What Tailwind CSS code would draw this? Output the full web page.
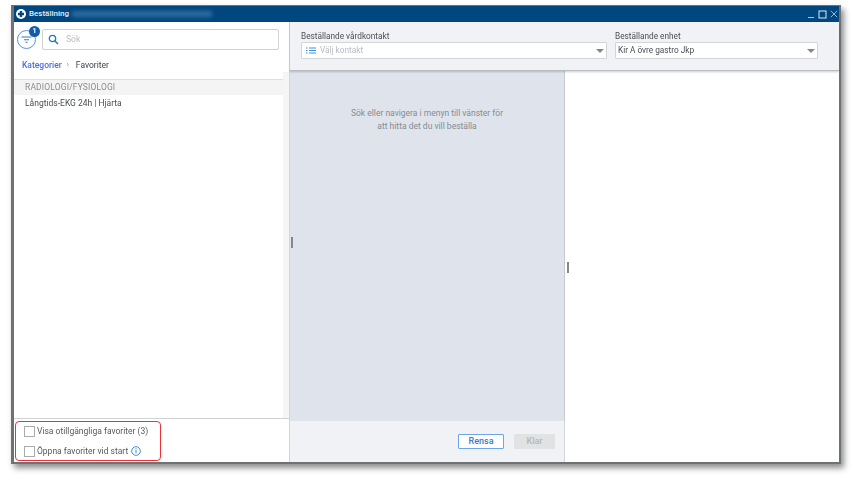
<!DOCTYPE html>
<html lang="en">
<head>
<meta charset="UTF-8" />
<meta name="viewport" content="width=device-width, initial-scale=1.0"/>
<title>Beställning</title>
<script src="https://cdn.jsdelivr.net/npm/@tailwindcss/browser@4"></script>
</head>
<body class="bg-white w-[854px] h-[482px] overflow-hidden pt-[5px] pl-[11px] font-['Roboto',sans-serif] text-[8.5px] text-[#444b54]">
  <!-- Window -->
  <div class="w-[830px] h-[459px] flex flex-col border-l-[3px] border-r-2 border-b-2 border-t border-[#6f7275] shadow-[3px_4px_6px_rgba(0,0,0,0.45)] blur-[0.35px]">
    <!-- Title bar -->
    <div class="h-[16px] shrink-0 bg-[#00467f] flex items-center pl-[2px] pr-[1px] text-white">
      <svg class="w-[10px] h-[10px]" viewBox="0 0 12 12"><circle cx="6" cy="6" r="6" fill="#fff"/><path d="M4.6 2.4h2.8v2.2h2.2v2.8H7.4v2.2H4.6V7.4H2.4V4.6h2.2z" fill="#00467f"/></svg>
      <span class="ml-[3px] text-[8px] font-medium text-[#e6eef5]">Beställning</span>
      <div class="ml-[3px] w-[140px] h-[6px] bg-[#2f6d9f] blur-[2px]"></div>
      <div class="ml-auto flex items-center gap-[3px]">
        <svg class="w-[8px] h-[8px]" viewBox="0 0 8 8"><path d="M1 7.5h6" stroke="#a9c2d8" stroke-width="1"/></svg>
        <svg class="w-[9px] h-[9px]" viewBox="0 0 9 9"><rect x="1" y="1" width="7" height="7" fill="none" stroke="#dfe9f1" stroke-width="1"/></svg>
        <svg class="w-[8px] h-[8px]" viewBox="0 0 8 8"><path d="M.8.8l6.4 6.4M7.2.8L.8 7.2" stroke="#a9c2d8" stroke-width="0.9"/></svg>
      </div>
    </div>

    <div class="flex-1 flex min-h-0">
      <!-- Left panel -->
      <div class="w-[275px] shrink-0 flex flex-col bg-white">
        <div class="flex-1 flex min-h-0">
          <div class="flex-1 min-w-0">
            <div class="flex items-center pl-[3px] pt-[7px] pr-[4px]">
              <div class="relative w-[19px] h-[19px] rounded-full border-[1.5px] border-[#4a97dc] flex items-center justify-center">
                <svg class="w-[11px] h-[9px]" viewBox="0 0 11 9"><path d="M.5 2h10M3 4.7h5M4.5 7.2h2" stroke="#2f7cc4" stroke-width="1.1"/></svg>
                <span class="absolute -top-[5px] -right-[5px] w-[11px] h-[11px] rounded-full bg-[#0f5ca8] text-white text-[7px] font-bold leading-[11px] text-center">1</span>
              </div>
              <div class="ml-[6px] w-[237px] h-[21px] bg-white border border-[#cfd2d6] rounded-[2px] flex items-center pl-[5px]">
                <svg class="w-[11px] h-[11px]" viewBox="0 0 11 11"><circle cx="4.5" cy="4.5" r="3.2" fill="none" stroke="#1f78c8" stroke-width="1.3"/><path d="M7 7l3 3" stroke="#1f78c8" stroke-width="1.5"/></svg>
                <span class="ml-[7px] text-[#b7bbc0]">Sök</span>
              </div>
            </div>
            <div class="flex items-center pl-[8px] mt-[9px] h-[12px]">
              <span class="text-[#4a70d0] font-medium">Kategorier</span>
              <span class="ml-[5px] mr-[7px] text-[7px] text-[#777]">›</span>
              <span class="text-[#3d4652]">Favoriter</span>
            </div>
            <div class="mt-[8px] h-[16px] bg-[#f4f4f5] border-t border-[#dddfe2] pl-[11px] flex items-center text-[8.5px] tracking-[0.15px] text-[#8a8d91]">RADIOLOGI/FYSIOLOGI</div>
            <div class="pl-[11px] mt-[2px] h-[12px] flex items-center text-[#4a4f55]">Långtids-EKG 24h | Hjärta</div>
          </div>
          <div class="w-[6px] shrink-0 mt-[50px] bg-[#f5f5f6]"></div>
        </div>
        <!-- Favourite options -->
        <div class="h-[44px] shrink-0 border-t border-[#cfd1d4] relative pl-[10px] pt-[6px] text-[#555a60]">
          <div class="flex items-center h-[12px]">
            <span class="w-[11px] h-[11px] border border-[#a8abaf] bg-white"></span>
            <span class="ml-[2px]">Visa otillgängliga favoriter (3)</span>
          </div>
          <div class="flex items-center h-[12px] mt-[8px]">
            <span class="w-[11px] h-[11px] border border-[#a8abaf] bg-white"></span>
            <span class="ml-[2px]">Öppna favoriter vid start</span>
            <svg class="ml-[3px] w-[10px] h-[10px]" viewBox="0 0 10 10"><circle cx="5" cy="5" r="4.3" fill="none" stroke="#2a7fd0" stroke-width="0.9"/><path d="M5 4.2v3M5 2.4v1" stroke="#2a7fd0" stroke-width="1"/></svg>
          </div>
          <div class="absolute left-[1px] top-[2px] w-[146px] h-[40px] border-[1.5px] border-[#ee3039] rounded-[4px]"></div>
        </div>
      </div>

      <!-- Main -->
      <div class="flex-1 min-w-0 flex flex-col border-l border-[#d4d6da]">
        <!-- Header -->
        <div class="h-[49px] shrink-0 bg-[#f0f2f6] border-b border-[#b9bcc1] shadow-[0_1px_2px_rgba(0,0,0,0.2)] flex pl-[11px] pt-[8px] relative z-10 text-[8.25px]">
          <div class="w-[306px]">
            <div class="h-[12px] leading-[12px] text-[#4a4f55]">Beställande vårdkontakt</div>
            <div class="h-[17px] bg-white border border-[#d3d5d9] rounded-[1px] flex items-center pl-[4px] pr-[2px]">
              <svg class="w-[10px] h-[7px]" viewBox="0 0 10 7"><path d="M0 1h1.5M3 1h7M0 3.5h1.5M3 3.5h7M0 6h1.5M3 6h7" stroke="#3f8fd8" stroke-width="1.1"/></svg>
              <span class="ml-[4px] text-[#b7bbc0]">Välj kontakt</span>
              <svg class="ml-auto w-[8px] h-[4px]" viewBox="0 0 8 4"><path d="M0 0h8L4 4z" fill="#85878b"/></svg>
            </div>
          </div>
          <div class="w-[203px] ml-[8px]">
            <div class="h-[12px] leading-[12px] text-[#4a4f55]">Beställande enhet</div>
            <div class="h-[17px] bg-white border border-[#d3d5d9] rounded-[1px] flex items-center pl-[2px] pr-[2px] text-[#4a4f55]">
              <span>Kir A övre gastro Jkp</span>
              <svg class="ml-auto w-[8px] h-[4px]" viewBox="0 0 8 4"><path d="M0 0h8L4 4z" fill="#85878b"/></svg>
            </div>
          </div>
        </div>
        <div class="flex-1 flex min-h-0">
          <!-- Middle column -->
          <div class="w-[275px] shrink-0 flex flex-col relative">
            <div class="flex-1 bg-[#dfe4ec] pt-[36px] text-center leading-[13px] text-[#868b94] border-r border-[#c6c9ce]">
              <p>Sök eller navigera i menyn till vänster för</p>
              <p>att hitta det du vill beställa</p>
            </div>
            <div class="h-[41px] shrink-0 bg-[#f0f2f6] border-r border-[#d4d6da] flex items-center justify-end pr-[9px] gap-[10px] text-[9px]">
              <button class="w-[46px] h-[15px] bg-white border border-[#6aa6e8] rounded-[1px] text-[#3f78c8] leading-[13px] font-medium">Rensa</button>
              <button class="w-[41px] h-[15px] bg-[#e1e2e3] rounded-[1px] text-[#b4b6b9] leading-[15px] font-medium">Klar</button>
            </div>
            <!-- Splitter handles -->
            <span class="absolute left-[1px] top-[166px] w-[2px] h-[11px] bg-[#85878a]"></span>
            <span class="absolute -right-[4px] top-[191px] w-[2px] h-[11px] bg-[#85878a]"></span>
          </div>
          <!-- Right column -->
          <div class="flex-1 bg-white"></div>
        </div>
      </div>
    </div>
  </div>
</body>
</html>
